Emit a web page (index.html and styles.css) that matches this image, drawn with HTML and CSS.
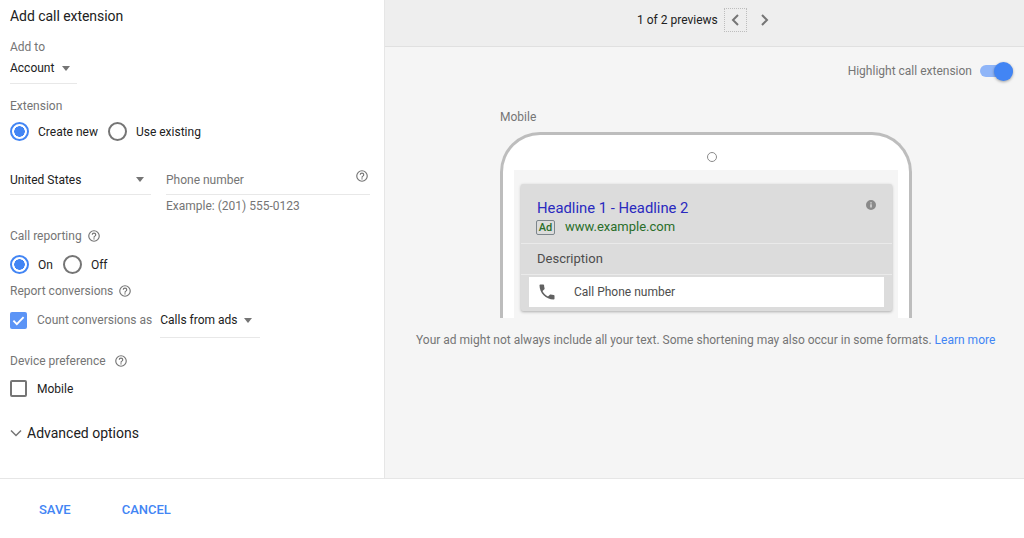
FILE: index.html
```html
<!DOCTYPE html>
<html lang="en">
<head>
<meta charset="utf-8">
<title>Add call extension</title>
<link rel="stylesheet" href="styles.css">
</head>
<body>
<div class="main">
  <section class="form">
    <h1 class="title">Add call extension</h1>
    <div class="label add-to">Add to</div>
    <div class="select account"><span class="dark">Account</span><i class="caret"></i></div>
    <div class="label ext">Extension</div>
    <div class="radios ext-radios">
      <span class="radio on"></span><span class="dark">Create new</span>
      <span class="radio"></span><span class="dark">Use existing</span>
    </div>
    <div class="phone-row">
      <div class="select country"><span class="dark">United States</span><i class="caret"></i></div>
      <div class="phone-field">
        <div class="phone-input"><span class="label">Phone number</span>
          <svg class="help" viewBox="0 0 24 24"><use href="#help"/></svg></div>
        <div class="label example">Example: (201) 555-0123</div>
      </div>
    </div>
    <div class="label with-help reporting">Call reporting <svg class="help" viewBox="0 0 24 24"><use href="#help"/></svg></div>
    <div class="radios report-radios">
      <span class="radio on"></span><span class="dark">On</span>
      <span class="radio"></span><span class="dark">Off</span>
    </div>
    <div class="label with-help conv">Report conversions <svg class="help" viewBox="0 0 24 24"><use href="#help"/></svg></div>
    <div class="count-row">
      <span class="check on"><svg viewBox="0 0 18 18"><path d="M3.6 9.2l3.6 3.6 7.2-7.4" fill="none" stroke="#fff" stroke-width="2"/></svg></span>
      <span class="label count-label">Count conversions as</span>
      <div class="select calls"><span class="dark">Calls from ads</span><i class="caret"></i></div>
    </div>
    <div class="label with-help device">Device preference <svg class="help" viewBox="0 0 24 24"><use href="#help"/></svg></div>
    <div class="mobile-row"><span class="check"></span><span class="dark">Mobile</span></div>
    <div class="advanced">
      <svg class="chev" viewBox="0 0 12 8"><path d="M1 1.5l5 5 5-5" fill="none" stroke="#757575" stroke-width="1.5"/></svg>
      <span>Advanced options</span>
    </div>
  </section>
  <section class="preview">
    <header class="pager">
      <span class="count">1 of 2 previews</span>
      <span class="page-btn boxed"><svg viewBox="0 0 12 14"><path d="M9 2L4 7l5 5" fill="none" stroke="#757575" stroke-width="2"/></svg></span>
      <span class="page-btn"><svg viewBox="0 0 12 14"><path d="M3 2l5 5-5 5" fill="none" stroke="#757575" stroke-width="2"/></svg></span>
    </header>
    <div class="highlight">
      <span class="label">Highlight call extension</span>
      <span class="toggle"><span class="knob"></span></span>
    </div>
    <div class="device-wrap">
      <div class="label mobile-title">Mobile</div>
      <div class="phone">
        <div class="camera"></div>
        <div class="screen">
          <div class="card">
            <div class="card-head">
              <div class="headline">Headline 1 - Headline 2</div>
              <div class="url-row"><span class="ad">Ad</span><span class="url">www.example.com</span></div>
              <svg class="info" viewBox="0 0 24 24"><path fill="#8a8a8a" d="M12 2a10 10 0 1 0 0 20 10 10 0 0 0 0-20zm1.500 15h-3v-6.500h3zm0-8h-3V6.500h3z"/></svg>
            </div>
            <div class="desc">Description</div>
            <div class="call">
              <svg viewBox="0 0 24 24"><path fill="#616161" d="M6.600 10.800c1.400 2.800 3.800 5.100 6.600 6.600l2.200-2.200c.3-.3.700-.4 1-.2 1.100.4 2.300.6 3.600.6.600 0 1 .4 1 1V20c0 .6-.4 1-1 1C10.600 21 3 13.400 3 4c0-.6.400-1 1-1h3.500c.6 0 1 .4 1 1 0 1.300.2 2.500.6 3.600.1.300 0 .7-.2 1z"/></svg>
              <span>Call Phone number</span>
            </div>
          </div>
        </div>
      </div>
    </div>
    <p class="note">Your ad might not always include all your text. Some shortening may also occur in some formats. <a class="learn">Learn more</a></p>
  </section>
</div>
<footer class="footer"><a class="action">SAVE</a><a class="action">CANCEL</a></footer>
<svg class="defs" aria-hidden="true"><symbol id="help" viewBox="0 0 24 24"><path fill="#757575" d="M11 18h2v-2h-2zm1-16a10 10 0 1 0 0 20 10 10 0 0 0 0-20zm0 18a8 8 0 1 1 0-16 8 8 0 0 1 0 16zm0-14a4 4 0 0 0-4 4h2a2 2 0 1 1 4 0c0 2-3 1.750-3 5h2c0-2.250 3-2.500 3-5a4 4 0 0 0-4-4z"/></symbol></svg>
</body>
</html>
```
FILE: styles.css
```css
* { box-sizing: border-box; }
html, body { margin: 0; height: 538px; overflow: hidden; background: #fff; }
body { font: 12px/16px Roboto, "Liberation Sans", sans-serif; color: #212121; }
.defs { display: none; }
.main { display: flex; height: 479px; border-bottom: 1px solid #e6e6e6; }
.form { width: 385px; flex: none; padding: 8px 0 0 10px; border-right: 1px solid #e6e6e6; background: #fff; }
.title { margin: 0; font-size: 14px; font-weight: 400; line-height: 16px; color: #212121; letter-spacing: -.05px; }
.label { color: #757575; }
.dark { color: #212121; }
.add-to { margin-top: 15px; }
.select { display: flex; align-items: center; border-bottom: 1px solid #e8e8e8; }
.caret { width: 0; height: 0; border: 4.500px solid transparent; border-top: 5px solid #757575; border-bottom: 0; }
.account { width: 67px; height: 28px; margin-top: 1px; padding-bottom: 3px; gap: 8px; }
.ext { margin-top: 14px; }
.radios { display: flex; align-items: center; }
.radio { width: 19px; height: 19px; flex: none; border: 2px solid #757575; border-radius: 50%; margin-right: 9px; background: #fff; }
.radio.on { border-color: #4285f4; background: radial-gradient(circle, #4285f4 0 5px, #fff 5.500px); }
.ext-radios { margin-top: 8px; height: 19px; }
.ext-radios .dark:nth-of-type(2) { margin-right: 10px; }
.phone-row { display: flex; gap: 15px; margin-top: 27px; }
.country { width: 141px; height: 27px; justify-content: space-between; padding: 0 7px 3px 0; }
.phone-field { width: 204px; }
.phone-input { height: 27px; display: flex; justify-content: space-between; padding-top: 3px; border-bottom: 1px solid #e8e8e8; }
.phone-input .label { padding-top: 1px; }
.phone-input .help { margin: -2px 1px 0 0; }
.help { width: 14px; height: 14px; flex: none; }
.example { margin-top: 3px; }
.with-help { display: flex; align-items: center; gap: 5px; }
.reporting { margin-top: 14px; }
.report-radios { margin-top: 11px; height: 19px; }
.report-radios .dark:nth-of-type(2) { margin-right: 10px; }
.conv { margin-top: 9px; }
.count-row { display: flex; align-items: flex-start; margin-top: 13px; }
.check { width: 17px; height: 17px; flex: none; border: 2px solid #757575; border-radius: 2px; display: block; }
.check.on { border: 0; background: #5b94f6; }
.check svg { display: block; width: 17px; height: 17px; }
.count-label { margin-left: 10px; line-height: 17px; }
.calls { width: 100px; height: 26px; margin-left: 8px; align-items: flex-start; gap: 6px; }
.calls .dark { line-height: 17px; }
.calls .caret { margin-top: 6px; }
.device { margin-top: 15px; gap: 8px; }
.mobile-row { display: flex; align-items: center; gap: 10px; margin-top: 11px; height: 17px; }
.advanced { display: flex; align-items: center; gap: 5px; margin-top: 28px; font-size: 14px; }
.chev { width: 12px; height: 8px; }
.preview { flex: 1; background: #f5f5f5; min-width: 0; }
.pager { height: 47px; background: #eee; border-bottom: 1px solid #e0e0e0; display: flex; align-items: center; padding: 0 0 0 252px; }
.count { color: #212121; margin-top: -7px; }
.page-btn { width: 23px; height: 24px; display: flex; align-items: center; justify-content: center; margin: 0 0 0 6px; }
.page-btn svg { width: 12px; height: 14px; }
.boxed { border: 1px dotted #bdbdbd; }
.pager .page-btn { margin-top: -6px; }
.page-btn + .page-btn { margin-left: 7px; }
.highlight { display: flex; justify-content: flex-end; align-items: center; gap: 8px; padding: 16px 11px 0 0; }
.toggle { width: 33px; height: 12px; border-radius: 6px; background: #8fb5f8; position: relative; display: block; }
.knob { position: absolute; right: 0; top: -3.500px; width: 19px; height: 19px; border-radius: 50%; background: #4285f4; box-shadow: 0 1px 3px rgba(0,0,0,.35); }
.device-wrap { margin: 30px 0 0 115px; width: 412px; }
.mobile-title { height: 16px; }
.phone { height: 186px; margin-top: 7px; background: #fff; border: 3px solid #bdbdbd; border-bottom: 0; border-radius: 40px 40px 0 0; padding: 0 11px; display: flex; flex-direction: column; overflow: hidden; }
.camera { width: 10px; height: 10px; border: 1px solid #8a8a8a; border-radius: 50%; margin: 17px 0 8px 193px; flex: none; }
.screen { flex: 1; background: #f5f5f5; padding: 14px 6px 0 7px; }
.card { height: 127px; background: #dcdcdc; border-radius: 2px; box-shadow: 0 1px 3px rgba(0,0,0,.3); padding-bottom: 4px; display: flex; flex-direction: column; }
.card-head { position: relative; height: 60px; padding: 15px 16px 0; border-bottom: 1px solid #eaeaea; }
.headline { font-size: 14.800px; line-height: 18px; color: #2a2abf; }
.url-row { display: flex; align-items: center; gap: 10px; margin-top: 2px; margin-left: -1px; }
.ad { width: 19px; height: 15px; border: 1px solid #7d868c; border-radius: 2px; font-size: 11px; line-height: 13px; text-align: center; color: #2a6e2a; font-weight: 500; }
.url { font-size: 13px; line-height: 16px; color: #2a6e2a; }
.info { position: absolute; right: 15px; top: 15px; width: 12px; height: 12px; }
.desc { height: 31px; padding: 0 16px; display: flex; align-items: center; border-bottom: 1px solid #eaeaea; color: #4d4d4d; font-size: 13px; }
.call { flex: 1; margin: 2px 8px 0; background: #fff; display: flex; align-items: center; color: #4d4d4d; gap: 17px; padding-left: 8px; }
.call svg { width: 20px; height: 20px; margin-top: -1px; }
.note { margin: 14px 0 0 31px; color: #757575; white-space: nowrap; line-height: 16px; }
.learn { color: #4285f4; }
.footer { height: 59px; display: flex; align-items: center; gap: 51px; padding: 3px 0 0 39px; }
.action { color: #4285f4; font-weight: 500; font-size: 13px; }
```
